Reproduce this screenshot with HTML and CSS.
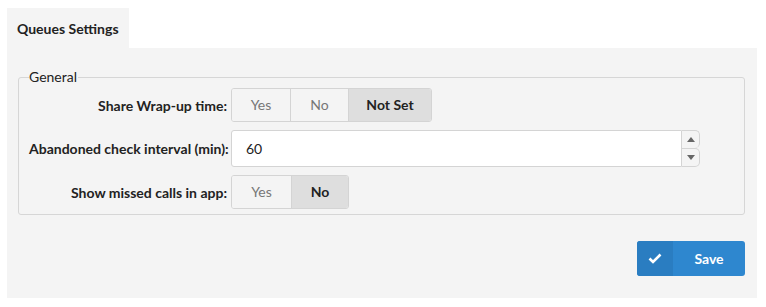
FILE: index.html
```html
<!DOCTYPE html>
<html>
<head>
<meta charset="utf-8">
<link rel="stylesheet" href="styles.css">
</head>
<body>
<div class="tabs">
  <div class="tab active">Queues Settings</div>
</div>
<div class="panel">
  <fieldset class="group">
    <legend>General</legend>
    <div class="form">
      <label class="label">Share Wrap-up time:</label>
      <div class="seg">
        <span class="opt w-yes">Yes</span>
        <span class="opt w-no">No</span>
        <span class="opt w-notset on">Not Set</span>
      </div>
      <label class="label">Abandoned check interval (min):</label>
      <div class="numwrap">
        <div class="num">60</div>
        <div class="spin">
          <span class="spin-btn up"><svg width="8" height="5" viewBox="0 0 8 5"><path d="M0 5 L4 0 L8 5 Z" fill="#666"/></svg></span>
          <span class="spin-btn down"><svg width="8" height="5" viewBox="0 0 8 5"><path d="M0 0 L4 5 L8 0 Z" fill="#666"/></svg></span>
        </div>
      </div>
      <label class="label">Show missed calls in app:</label>
      <div class="seg">
        <span class="opt w-yes2">Yes</span>
        <span class="opt w-no2 on">No</span>
      </div>
    </div>
  </fieldset>
  <div class="actions">
    <button class="save"><span class="save-ico"><svg width="14" height="11" viewBox="0 0 14 11"><path d="M1.5 5.5 L5 9 L12.5 1.5" fill="none" stroke="#fff" stroke-width="2.6"/></svg></span><span class="save-txt">Save</span></button>
  </div>
</div>
</body>
</html>
```
FILE: styles.css
```css
html, body { background: #fff; }
body {
  margin: 8px 9px 9px 7px;
  font-family: Lato, "Open Sans", sans-serif;
  font-size: 14px;
  color: #222;
}
.tabs { display: flex; }
.tab {
  width: 122px;
  height: 40px;
  box-sizing: border-box;
  padding: 12px 0 0 10px;
  background: #f4f4f4;
  font-weight: 700;
  line-height: 17px;
  color: #222;
}
.panel {
  background: #f4f4f4;
  height: 250px;
  box-sizing: border-box;
  padding: 21px 12px 0 11px;
  display: flex;
  flex-direction: column;
}
.group {
  margin: 0;
  border: 1px solid #d6d6d6;
  border-radius: 3px;
  padding: 3px 10px 5px 10px;
}
.group legend {
  padding: 0 1px 0 0;
  line-height: 16px;
  color: #222;
}
.form {
  display: grid;
  grid-template-columns: 198px 1fr;
  column-gap: 4px;
  row-gap: 8px;
  align-items: center;
}
.label {
  text-align: right;
  font-weight: 700;
  color: #222;
  white-space: nowrap;
}
.seg {
  display: flex;
  border: 1px solid #d4d4d4;
  border-radius: 3px;
  width: max-content;
  overflow: hidden;
}
.opt {
  height: 32px;
  line-height: 32px;
  text-align: center;
  color: #777;
  background: #f4f4f4;
  border-left: 1px solid #d4d4d4;
}
.opt:first-child { border-left: none; }
.opt.on { background: #dedede; color: #222; font-weight: 700; }
.w-yes { width: 58px; }
.w-no { width: 57px; }
.w-notset { width: 82px; }
.w-yes2 { width: 59px; }
.w-no2 { width: 56px; }
.numwrap {
  display: flex;
  width: 469px;
  margin: 0;
}
.num {
  flex: 1;
  height: 37px;
  box-sizing: border-box;
  border: 1px solid #d4d4d4;
  border-radius: 3px 0 0 3px;
  background: #fff;
  line-height: 35px;
  padding-left: 14px;
  color: #222;
}
.spin {
  width: 18px;
  display: flex;
  flex-direction: column;
}
.spin-btn {
  flex: 1;
  box-sizing: border-box;
  border: 1px solid #d4d4d4;
  border-left: none;
  background: #f4f4f4;
  display: flex;
  align-items: center;
  justify-content: center;
}
.spin-btn.up { border-radius: 0 5px 5px 0; border-bottom: none; }
.spin-btn.down { border-radius: 0 5px 5px 0; }
.actions {
  display: flex;
  justify-content: flex-end;
  margin-top: 26px;
}
.save {
  display: flex;
  width: 108px;
  height: 35px;
  padding: 0;
  border: none;
  border-radius: 3px;
  overflow: hidden;
  background: #2e87cf;
  font-family: inherit;
  font-size: 14px;
  font-weight: 700;
  color: #fff;
  cursor: pointer;
}
.save-ico {
  width: 36px;
  height: 100%;
  background: #2a7dc1;
  display: flex;
  align-items: center;
  justify-content: center;
}
.save-txt {
  flex: 1;
  line-height: 35px;
  text-align: center;
}
```
